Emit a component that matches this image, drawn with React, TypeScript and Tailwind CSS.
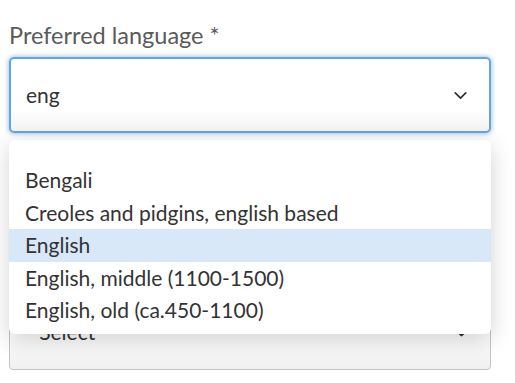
import { ChevronDown } from "lucide-react";

const options = [
  "Bengali",
  "Creoles and pidgins, english based",
  "English",
  "English, middle (1100-1500)",
  "English, old (ca.450-1100)",
];

export default function App() {
  return (
    <div className="relative h-[383px] w-[515px] bg-white font-['Lato',sans-serif] text-[#333]">
      <div className="flex w-[500px] flex-col px-[9px] pt-[21px]">
        <label className="text-[23.5px] leading-[29px] text-[#5a5a5a]">Preferred language *</label>
        <div className="mt-[7px] flex h-[76px] items-center justify-between rounded-[5px] border-2 border-[#6aa3d9] bg-gradient-to-b from-white from-70% to-[#f3f3f3] pl-[15px] pr-[18px] shadow-[0_0_4px_1px_rgba(91,155,213,0.55)]">
          <span className="text-[21px]">eng</span>
          <ChevronDown className="h-[21px] w-[21px] text-[#333]" strokeWidth={2} />
        </div>
        <div className="h-[161px]" />
        <div className="flex h-[76px] items-center justify-between rounded-[4px] border border-[#c4c4c4] bg-gradient-to-b from-white from-50% to-[#f0f0f0] pl-[16px] pr-[18px]">
          <span className="text-[21px] text-[#333]">- Select -</span>
          <ChevronDown className="h-[21px] w-[21px] text-[#333]" strokeWidth={2.75} />
        </div>
      </div>

      <div className="absolute left-[9px] top-[140px] w-[482px] rounded-[6px] bg-white pb-[7px] pt-[24px] shadow-[0_6px_22px_rgba(0,0,0,0.18)]">
        {options.map((o) => (
          <div
            key={o}
            className={`h-[32.5px] pl-[16px] text-[21px] leading-[32.5px] ${o === "English" ? "bg-[#d8e8f8]" : ""}`}
          >
            {o}
          </div>
        ))}
      </div>
    </div>
  );
}
